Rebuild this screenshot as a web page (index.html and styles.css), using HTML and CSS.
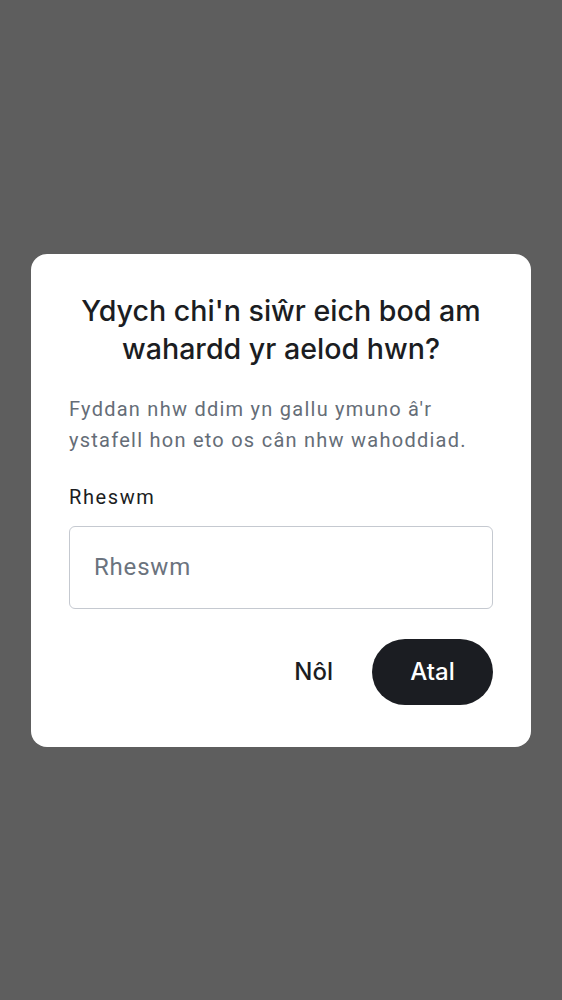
FILE: index.html
```html
<!DOCTYPE html>
<html>
<head>
<meta charset="utf-8">
<link rel="stylesheet" href="styles.css">
</head>
<body>
<div class="overlay">
  <div class="dialog">
    <h1 class="title">Ydych chi'n siŵr eich bod am wahardd yr aelod hwn?</h1>
    <p class="desc">Fyddan nhw ddim yn gallu ymuno â'r ystafell hon eto os cân nhw wahoddiad.</p>
    <label class="label" for="reason">Rheswm</label>
    <input class="input" id="reason" type="text" placeholder="Rheswm">
    <div class="actions">
      <button class="btn btn-text">Nôl</button>
      <button class="btn btn-primary">Atal</button>
    </div>
  </div>
</div>
</body>
</html>
```
FILE: styles.css
```css
html, body {
  margin: 0;
  padding: 0;
  height: 100%;
}
body {
  background: #5e5e5e;
  font-family: Inter, "Noto Sans", sans-serif;
}
.overlay {
  height: 1000px;
  display: flex;
  align-items: center;
  justify-content: center;
}
.dialog {
  width: 500px;
  box-sizing: border-box;
  background: #ffffff;
  border-radius: 16px;
  padding: 38px 38px 42px;
  display: flex;
  flex-direction: column;
}
.title {
  margin: 0;
  font-family: Inter, sans-serif;
  font-weight: 500;
  font-size: 28.6px;
  line-height: 38px;
  color: #1b1d22;
  text-align: center;
}
.desc {
  margin: 26px 0 0;
  font-family: Roboto, sans-serif;
  font-size: 20px;
  line-height: 31px;
  letter-spacing: 1.25px;
  color: #656d77;
}
.label {
  margin-top: 27px;
  font-family: Roboto, sans-serif;
  font-size: 20px;
  line-height: 28px;
  letter-spacing: 1.6px;
  color: #1b1d22;
}
.input {
  margin-top: 15px;
  height: 83px;
  box-sizing: border-box;
  border: 1px solid #c5c9d0;
  border-radius: 6px;
  padding: 0 24px;
  font-family: Roboto, sans-serif;
  font-size: 24px;
  letter-spacing: 0.8px;
  color: #1b1d22;
  outline: none;
}
.input::placeholder {
  color: #6b737e;
}
.actions {
  margin-top: 30px;
  display: flex;
  justify-content: flex-end;
  align-items: center;
  gap: 19px;
}
.btn {
  font-family: Inter, sans-serif;
  font-weight: 500;
  font-size: 24px;
  border: none;
  cursor: pointer;
  height: 66px;
  border-radius: 33px;
  padding: 0 20px;
}
.btn-text {
  background: transparent;
  color: #1b1d22;
}
.btn-primary {
  background: #1b1d22;
  color: #ffffff;
  width: 121px;
  padding: 0;
}
```
